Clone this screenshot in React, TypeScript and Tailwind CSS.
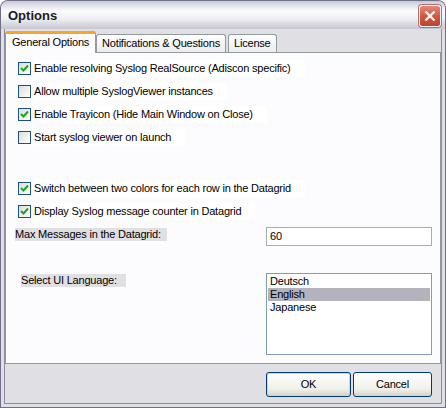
import { useState } from 'react'

const font = { fontFamily: '"Liberation Sans", Arial, sans-serif' }

function Check({ checked, label }: { checked: boolean; label: string }) {
    return (
        <div className="flex items-center h-[17px] ml-[12px]">
            <div className="w-[13px] h-[13px] border border-[#1c5180] bg-[linear-gradient(135deg,#dcdcd7_0%,#ffffff_100%)] flex items-center justify-center">
                {checked && (
                    <svg width="9" height="9" viewBox="0 0 9 9">
                        <path d="M1 4 L3.5 6.5 L8 1.5" stroke="#21a121" strokeWidth="2" fill="none" />
                    </svg>
                )}
            </div>
            <span className="ml-[3px] pr-[14px] bg-white h-[17px] leading-[17px]">{label}</span>
        </div>
    )
}

export default function App() {
    const [lang, setLang] = useState('English')
    return (
        <div
            style={font}
            className="w-[446px] h-[408px] text-[11px] tracking-[-0.2px] text-black bg-[#6f6f88] rounded-t-[8px] p-[1px] overflow-hidden"
        >
            <div className="w-full h-full rounded-t-[7px] bg-[#e0dfe3] flex flex-col">
                {/* title bar */}
                <div className="h-[28px] rounded-t-[7px] bg-[linear-gradient(180deg,#c9c9d6_0%,#fbfbfd_35%,#f2f2f6_60%,#c6c6d2_100%)] flex items-center justify-between pl-[7px] pr-[4px]">
                    <span className="font-bold text-[13px] tracking-normal text-[#1c1c1c] mt-[2px]">Options</span>
                    <button className="w-[22px] h-[22px] mt-[2px] rounded-[3px] border border-white bg-[linear-gradient(180deg,#e5887a_0%,#d3533f_55%,#c1432f_100%)] flex items-center justify-center shadow-[0_0_0_1px_#b07070]">
                        <svg width="12" height="12" viewBox="0 0 12 12">
                            <path d="M1.5 1.5 L10.5 10.5 M10.5 1.5 L1.5 10.5" stroke="#fff" strokeWidth="2.2" />
                        </svg>
                    </button>
                </div>

                <div className="flex-1 flex flex-col border-x-[3px] border-b-[3px] border-[#e0dfe3] shadow-[inset_1px_0_0_#8c8ca0,inset_-1px_0_0_#8c8ca0,inset_0_-1px_0_#8c8ca0]">
                    <div className="flex-1 flex flex-col px-[1px] pb-[1px]">
                        {/* tabs */}
                        <div className="flex items-end h-[23px] relative z-10">
                            <div className="h-[22px] px-[6px] bg-[#fcfcfe] border-t-[3px] border-t-[#f4a72f] border-x border-x-[#919b9c] rounded-t-[3px] leading-[17px] mb-[-1px] pb-[1px]">
                                General Options
                            </div>
                            <div className="h-[18px] px-[5px] bg-[linear-gradient(180deg,#ffffff_0%,#ececef_100%)] border border-b-0 border-[#919b9c] rounded-t-[3px] leading-[16px]">
                                Notifications &amp; Questions
                            </div>
                            <div className="h-[18px] px-[5px] ml-[2px] bg-[linear-gradient(180deg,#ffffff_0%,#ececef_100%)] border border-b-0 border-[#919b9c] rounded-t-[3px] leading-[16px]">
                                License
                            </div>
                        </div>

                        {/* pane */}
                        <div className="h-[312px] bg-[#fcfcfe] border border-[#919b9c] flex flex-col pt-[7px]">
                            <div className="flex flex-col gap-[6px]">
                                <Check checked label="Enable resolving Syslog RealSource (Adiscon specific)" />
                                <Check checked={false} label="Allow multiple SyslogViewer instances" />
                                <Check checked label="Enable Trayicon (Hide Main Window on Close)" />
                                <Check checked={false} label="Start syslog viewer on launch" />
                            </div>
                            <div className="flex flex-col gap-[6px] mt-[34px]">
                                <Check checked label="Switch between two colors for each row in the Datagrid" />
                                <Check checked label="Display Syslog message counter in Datagrid" />
                            </div>
                            <div className="flex items-start mt-[7px]">
                                <span className="ml-[9px] mt-[1px] w-[152px] h-[13px] leading-[13px] bg-[#e0dfe3]">
                                    Max Messages in the Datagrid:
                                </span>
                                <div className="ml-[99px] w-[166px] h-[19px] border border-[#a5acb5] bg-white leading-[17px] pl-[3px]">
                                    60
                                </div>
                            </div>
                            <div className="flex items-start mt-[27px]">
                                <span className="ml-[15px] mt-[1px] w-[105px] h-[13px] leading-[13px] bg-[#e0dfe3]">
                                    Select UI Language:
                                </span>
                                <div className="ml-[140px] w-[166px] h-[82px] border border-[#7f9db9] bg-white p-[1px]">
                                    {['Deutsch', 'English', 'Japanese'].map((l) => (
                                        <div
                                            key={l}
                                            onClick={() => setLang(l)}
                                            className={
                                                'h-[13px] leading-[13px] pl-[2px] ' +
                                                (lang === l ? 'bg-[#b3b2bd]' : '')
                                            }
                                        >
                                            {l}
                                        </div>
                                    ))}
                                </div>
                            </div>
                        </div>

                        {/* buttons */}
                        <div className="flex-1 flex justify-end items-start pt-[8px] pr-[9px] gap-[2px]">
                            <button className="w-[85px] h-[25px] rounded-[3px] border border-[#003c74] bg-[linear-gradient(180deg,#ffffff_0%,#f0f0ea_70%,#d6d0c5_100%)] shadow-[inset_0_0_0_1px_#c3d3fd]">
                                OK
                            </button>
                            <button className="w-[79px] h-[25px] rounded-[3px] border border-[#003c74] bg-[linear-gradient(180deg,#ffffff_0%,#f0f0ea_70%,#d6d0c5_100%)]">
                                Cancel
                            </button>
                        </div>
                    </div>
                </div>
            </div>
        </div>
    )
}
